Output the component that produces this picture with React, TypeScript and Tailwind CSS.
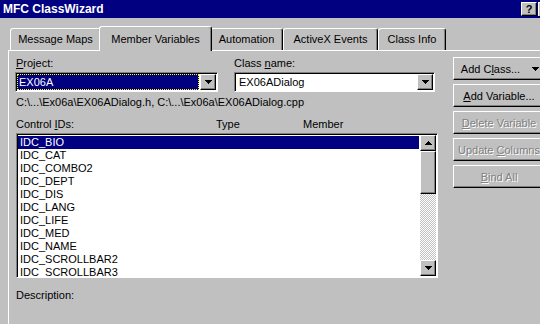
import React from "react"

const raised =
  "border border-t-white border-l-white border-r-black border-b-black shadow-[inset_-1px_-1px_#808080]"
const sunken =
  "border border-t-[#808080] border-l-[#808080] border-r-white border-b-white shadow-[inset_1px_1px_#000]"

function DownArrow() {
  return (
    <svg width="7" height="4" viewBox="0 0 7 4" shapeRendering="crispEdges">
      <path d="M0 0h7v1h-1v1h-1v1h-1v1h-1v-1h-1v-1h-1v-1h-1z" fill="#000" />
    </svg>
  )
}

function UpArrow() {
  return (
    <svg width="7" height="4" viewBox="0 0 7 4" shapeRendering="crispEdges">
      <path d="M3 0h1v1h1v1h1v1h1v1h-7v-1h1v-1h1v-1h1z" fill="#000" />
    </svg>
  )
}

function DropButton() {
  return (
    <div className={`w-[16px] h-[16px] bg-[#c0c0c0] flex items-center justify-center ${raised}`}>
      <DownArrow />
    </div>
  )
}

const tabs = [
  { label: "Message Maps", w: "w-[91px]" },
  { label: "Member Variables", w: "w-[113px]", active: true },
  { label: "Automation", w: "w-[73px]" },
  { label: "ActiveX Events", w: "w-[95px]" },
  { label: "Class Info", w: "w-[68px]" },
]

const ids = [
  "IDC_BIO",
  "IDC_CAT",
  "IDC_COMBO2",
  "IDC_DEPT",
  "IDC_DIS",
  "IDC_LANG",
  "IDC_LIFE",
  "IDC_MED",
  "IDC_NAME",
  "IDC_SCROLLBAR2",
  "IDC_SCROLLBAR3",
]

function SideButton({ children, disabled }: { children: React.ReactNode; disabled?: boolean }) {
  return (
    <div
      className={`w-[92px] h-[23px] bg-[#c0c0c0] flex items-center justify-center ${raised} ${
        disabled ? "text-[#808080] [text-shadow:1px_1px_0_#fff]" : "text-black"
      }`}
    >
      {children}
    </div>
  )
}

export default function App() {
  return (
    <div className="w-[540px] h-[324px] bg-[#c0c0c0] overflow-hidden font-['Liberation_Sans',Arial,sans-serif] text-[11px] text-black leading-[14px]">
      {/* title bar */}
      <div className="h-[18px] bg-[#000080] flex items-center pl-[3px]">
        <span className="flex-1 text-white font-bold text-[12px] leading-[18px]">MFC ClassWizard</span>
        <div className={`w-[16px] h-[14px] shrink-0 bg-[#c0c0c0] flex items-center justify-center font-bold text-[11px] ${raised}`}>
          ?
        </div>
        <div className="ml-[1px] w-[2px] h-[14px] shrink-0 bg-[#c0c0c0] border-l border-t border-white" />
      </div>

      <div className="pt-[8px] pl-[8px]">
        {/* tabs */}
        <div className="flex items-start h-[24px] pl-[2px]">
          {tabs.map((t) =>
            t.active ? (
              <div
                key={t.label}
                className={`${t.w} -mx-[2px] h-[25px] relative z-10 bg-[#c0c0c0] border-t border-l border-r border-t-white border-l-white border-r-black rounded-t-[3px] shadow-[inset_-1px_0_#808080] flex justify-center pt-[5px]`}
              >
                {t.label}
              </div>
            ) : (
              <div
                key={t.label}
                className={`${t.w} mt-[2px] h-[22px] bg-[#c0c0c0] border-t border-l border-r border-t-white border-l-white border-r-black rounded-t-[3px] shadow-[inset_-1px_0_#808080] flex justify-center pt-[3px]`}
              >
                {t.label}
              </div>
            )
          )}
        </div>

        {/* panel */}
        <div className="border-t border-l border-white h-[300px] flex pl-[7px]">
          <div className="w-[422px] flex flex-col">
            <div className="flex mt-[5px] h-[14px]">
              <div className="w-[218px]">
                <u>P</u>roject:
              </div>
              <div>
                Class <u>n</u>ame:
              </div>
            </div>
            <div className="flex mt-[2px]">
              <div className={`-ml-[1px] w-[203px] h-[20px] bg-white p-[1px] flex items-center ${sunken}`}>
                <div className="flex-1 h-[16px] bg-[#000080] border border-dotted border-[#ffff00] text-white flex items-center pl-[1px] mr-[1px]">
                  EX06A
                </div>
                <DropButton />
              </div>
              <div className={`ml-[16px] w-[201px] h-[20px] bg-white p-[1px] flex items-center ${sunken}`}>
                <div className="flex-1 pl-[3px]">EX06ADialog</div>
                <DropButton />
              </div>
            </div>
            <div className="mt-[3px] h-[14px]">C:\...\Ex06a\EX06ADialog.h, C:\...\Ex06a\EX06ADialog.cpp</div>
            <div className="flex mt-[8px] h-[14px]">
              <div className="w-[200px]">
                Control <u>I</u>Ds:
              </div>
              <div className="w-[87px]">Type</div>
              <div>Member</div>
            </div>
            <div className={`mt-[2px] w-[422px] h-[145px] bg-white flex p-[1px] ${sunken} shadow-[inset_1px_1px_#000,inset_-1px_-1px_#dfdfdf]`}>
              <div className="flex-1 pt-[1px] overflow-hidden">
                {ids.map((id, i) => (
                  <div
                    key={id}
                    className={`h-[13px] leading-[12px] pl-[2px] mr-[1px] ${i === 0 ? "bg-[#000080] text-white" : ""}`}
                  >
                    {id}
                  </div>
                ))}
              </div>
              <div className="w-[16px] flex flex-col">
                <div className={`h-[16px] bg-[#c0c0c0] flex items-center justify-center ${raised}`}>
                  <UpArrow />
                </div>
                <div className={`h-[43px] bg-[#c0c0c0] ${raised}`} />
                <div className="flex-1 bg-[repeating-conic-gradient(#c0c0c0_0%_25%,#ffffff_0%_50%)] bg-[length:2px_2px]" />
                <div className={`h-[16px] bg-[#c0c0c0] flex items-center justify-center ${raised}`}>
                  <DownArrow />
                </div>
              </div>
            </div>
            <div className="mt-[10px]">Description:</div>
          </div>

          <div className="ml-[15px] mt-[6px] flex flex-col gap-[4px]">
            <SideButton>
              <span className="flex items-center gap-[12px] pl-[2px]">
                <span>
                  Add C<u>l</u>ass...
                </span>
                <DownArrow />
              </span>
            </SideButton>
            <SideButton>
              <span>
                <u>A</u>dd Variable...
              </span>
            </SideButton>
            <SideButton disabled>
              <span>
                <u>D</u>elete Variable
              </span>
            </SideButton>
            <SideButton disabled>
              <span>
                Update <u>C</u>olumns
              </span>
            </SideButton>
            <SideButton disabled>
              <span>
                <u>B</u>ind All
              </span>
            </SideButton>
          </div>
        </div>
      </div>
    </div>
  )
}
